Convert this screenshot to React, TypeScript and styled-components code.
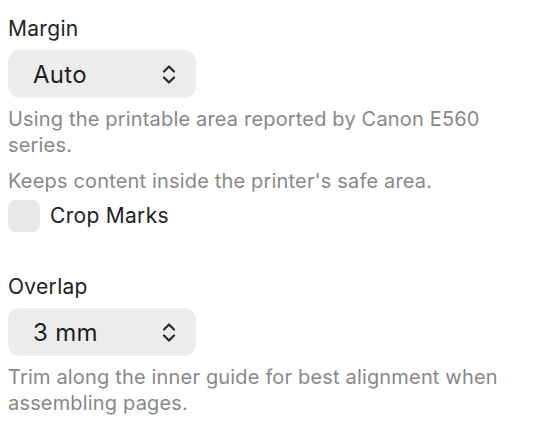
import React from "react";
import styled, { createGlobalStyle } from "styled-components";

const GlobalStyle = createGlobalStyle`
  html, body { margin: 0; padding: 0; background: #ffffff; }
  body {
    font-family: Inter, "Noto Sans", "Liberation Sans", sans-serif;
    -webkit-font-smoothing: antialiased;
  }
`;

const Panel = styled.div`
  display: flex;
  flex-direction: column;
  padding: 16px 8px 8px 8px;
  width: 505px;
`;

const Section = styled.section<{ $gap?: number }>`
  display: flex;
  flex-direction: column;
  margin-top: ${(p) => p.$gap ?? 0}px;
`;

const Label = styled.div`
  font-size: 21px;
  line-height: 26px;
  letter-spacing: 0.3px;
  color: #222222;
  margin-bottom: 8px;
`;

const SelectBox = styled.div`
  display: flex;
  align-items: center;
  justify-content: space-between;
  width: 188px;
  height: 48px;
  box-sizing: border-box;
  padding: 0 20px 0 25px;
  background: #ececec;
  border-radius: 12px;
  font-size: 24px;
  letter-spacing: 0.3px;
  color: #1f1f1f;
`;

const Help = styled.p<{ $top?: number }>`
  margin: ${(p) => p.$top ?? 0}px 0 0 0;
  font-size: 20px;
  line-height: 26px;
  letter-spacing: 0.17px;
  color: #888888;
`;

const CheckRow = styled.label`
  display: flex;
  align-items: center;
  gap: 10px;
  margin-top: 6px;
  font-size: 21px;
  line-height: 26px;
  letter-spacing: 0.3px;
  color: #222222;
`;

const Box = styled.span`
  width: 32px;
  height: 32px;
  border-radius: 8px;
  background: #e8e8e8;
  display: inline-block;
`;

const Chevrons = () => (
  <svg width="14" height="21" viewBox="0 0 14 21" fill="none">
    <path d="M2 7.5 L7 2.5 L12 7.5" stroke="#2a2a2a" strokeWidth="2.2" strokeLinecap="round" strokeLinejoin="round" />
    <path d="M2 13.5 L7 18.5 L12 13.5" stroke="#2a2a2a" strokeWidth="2.2" strokeLinecap="round" strokeLinejoin="round" />
  </svg>
);

const Select = ({ value }: { value: string }) => (
  <SelectBox>
    <span>{value}</span>
    <Chevrons />
  </SelectBox>
);

export default function App() {
  return (
    <>
      <GlobalStyle />
      <Panel>
        <Section>
          <Label>Margin</Label>
          <Select value="Auto" />
          <Help $top={8}>Using the printable area reported by Canon E560 series.</Help>
          <Help $top={10}>Keeps content inside the printer's safe area.</Help>
          <CheckRow>
            <Box />
            Crop Marks
          </CheckRow>
        </Section>
        <Section $gap={42}>
          <Label>Overlap</Label>
          <Select value="3 mm" />
          <Help $top={8}>Trim along the inner guide for best alignment when assembling pages.</Help>
        </Section>
      </Panel>
    </>
  );
}
